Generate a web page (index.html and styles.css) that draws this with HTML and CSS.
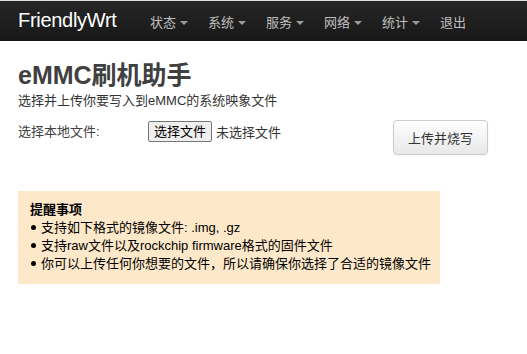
FILE: index.html
```html
<!DOCTYPE html>
<html lang="zh-CN">
<head>
  <meta charset="UTF-8">
  <title>eMMC刷机助手 - FriendlyWrt</title>
  <link rel="stylesheet" href="styles.css">
</head>
<body>
  <div class="navbar">
    <a class="brand" href="#">FriendlyWrt</a>
    <ul class="nav">
      <li><a href="#">状态<span class="caret"></span></a></li>
      <li><a href="#">系统<span class="caret"></span></a></li>
      <li><a href="#">服务<span class="caret"></span></a></li>
      <li><a href="#">网络<span class="caret"></span></a></li>
      <li><a href="#">统计<span class="caret"></span></a></li>
      <li><a href="#">退出</a></li>
    </ul>
  </div>

  <div class="main">
    <h2>eMMC刷机助手</h2>
    <p class="desc">选择并上传你要写入到eMMC的系统映象文件</p>

    <div class="upload-row">
      <label class="field-label">选择本地文件:</label>
      <div class="file-pick">
        <span class="file-btn">选择文件</span>
        <span class="file-name">未选择文件</span>
      </div>
      <button class="btn">上传并烧写</button>
    </div>

    <div class="notice">
      <h4>提醒事项</h4>
      <ul>
        <li>支持如下格式的镜像文件: .img, .gz</li>
        <li>支持raw文件以及rockchip firmware格式的固件文件</li>
        <li>你可以上传任何你想要的文件，所以请确保你选择了合适的镜像文件</li>
      </ul>
    </div>
  </div>
</body>
</html>
```

FILE: styles.css
```css
body {
  margin: 0;
  font-family: "Liberation Sans", "Noto Sans CJK SC", sans-serif;
  font-size: 13px;
  color: #404040;
  background: #fff;
}

.navbar {
  display: flex;
  align-items: center;
  height: 40px;
  border-top: 1px solid #ddd;
  background: linear-gradient(#262626, #181818);
  padding-left: 18px;
}

.brand {
  color: #fff;
  font-size: 20px;
  text-decoration: none;
  letter-spacing: -0.3px;
  width: 132px;
  margin-top: -2px;
}

.nav {
  display: flex;
  list-style: none;
  margin: 0;
  padding: 0;
}

.nav li a {
  display: block;
  width: 58px;
  color: #bfbfbf;
  font-size: 13px;
  text-decoration: none;
}

.caret {
  display: inline-block;
  margin-left: 4px;
  vertical-align: middle;
  border-top: 4px solid #999;
  border-left: 4px solid transparent;
  border-right: 4px solid transparent;
}

.main {
  padding: 0 18px;
}

h2 {
  margin: 19px 0 0;
  font-size: 25px;
  line-height: 30px;
  font-weight: bold;
  color: #404040;
}

.desc {
  margin: 2px 0 0;
  line-height: 18px;
  color: #333;
}

.upload-row {
  display: flex;
  align-items: flex-start;
  margin-top: 13px;
}

.field-label {
  width: 130px;
  line-height: 18px;
}

.file-pick {
  display: flex;
  align-items: center;
  margin-top: -2px;
  gap: 4px;
}

.file-btn {
  padding: 1px 5px;
  border: 1px solid #767676;
  border-radius: 2px;
  background: #efefef;
  color: #000;
  font-size: 13px;
  line-height: 17px;
}

.file-name {
  color: #333;
}

.btn {
  margin-left: auto;
  margin-right: 21px;
  margin-top: -3px;
  height: 35px;
  padding: 0 14px;
  font-family: inherit;
  font-size: 13px;
  color: #333;
  border: 1px solid #ccc;
  border-radius: 4px;
  background: linear-gradient(#fff, #e8e8e8);
  box-shadow: 0 1px 2px rgba(0, 0, 0, 0.05);
}

.notice {
  width: 398px;
  margin-top: 36px;
  padding: 10px 12px 11px;
  background: #fde9c9;
  color: #000;
}

.notice h4 {
  margin: 0;
  font-size: 13px;
  line-height: 18px;
  font-weight: bold;
}

.notice ul {
  margin: 0;
  padding: 0;
  list-style: none;
}

.notice li {
  line-height: 18px;
  white-space: nowrap;
}

.notice li::before {
  content: "";
  display: inline-block;
  width: 5px;
  height: 5px;
  margin: 0 5px 2px 1px;
  border-radius: 50%;
  background: #000;
}
```
